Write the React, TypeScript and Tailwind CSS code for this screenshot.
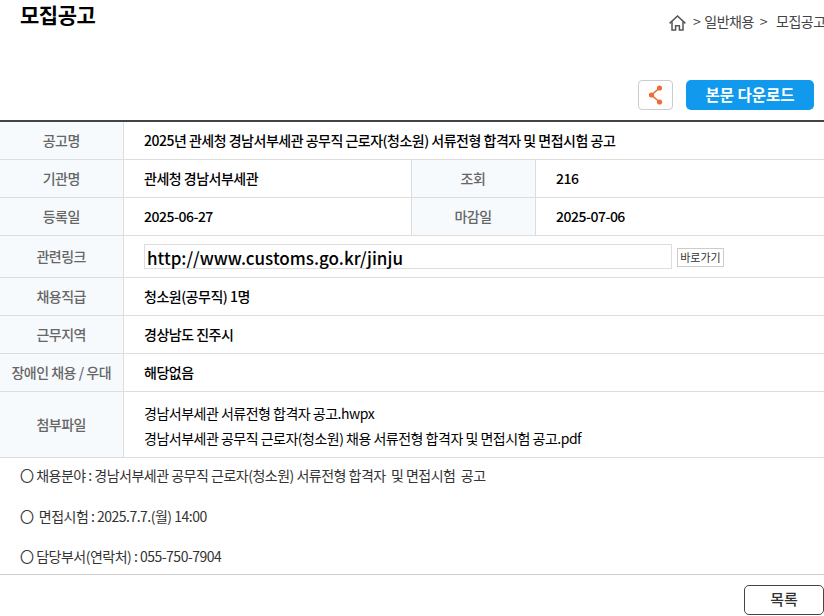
const th = 'bg-[#f7fafd] border-b border-r border-[#dddddd] text-center text-[14px] font-medium text-[#666666] tracking-[-0.5px] p-0'
const td = 'border-b border-[#dddddd] text-[14px] font-medium text-black tracking-[-0.5px] pl-[20.5px] p-0'

function HomeIcon() {
  return (
    <svg width="17" height="16" viewBox="0 0 17 16" fill="none" stroke="#555555" strokeWidth="1.5" className="mt-[5px] shrink-0">
      <path d="M0.6 8.4 8.5 1l7.9 7.4" />
      <path d="M3 6.5V15h3.6v-4.2h3.8V15H14V6.5" />
    </svg>
  )
}

function ShareIcon() {
  return (
    <svg width="16" height="22" viewBox="0 0 16 22" fill="#ee6c35" stroke="#ee6c35">
      <path d="M11.5 4 3.5 11l8 7" fill="none" strokeWidth="1.6" />
      <circle cx="11.5" cy="4" r="2.6" strokeWidth="0" />
      <circle cx="3.5" cy="11" r="2.6" strokeWidth="0" />
      <circle cx="11.5" cy="18" r="2.6" strokeWidth="0" />
    </svg>
  )
}

export default function App() {
  return (
    <div className="w-[824px] h-[616px] overflow-hidden bg-white font-['Noto_Sans_CJK_KR','Noto_Sans',sans-serif]">
      {/* Title + breadcrumb */}
      <div className="flex justify-between h-[80px]">
        <h2 className="pl-5 text-[21px] leading-[28px] font-bold text-black tracking-[-0.5px]">모집공고</h2>
        <div className="flex items-start pt-[10px] text-[14px] leading-[22px] text-[#444444] tracking-[-0.5px] whitespace-nowrap w-[155px]">
          <HomeIcon />
          <span className="ml-[7px]">&gt;</span>
          <span className="ml-[4px]">일반채용</span>
          <span className="ml-[6px]">&gt;</span>
          <span className="ml-[9px]">모집공고</span>
        </div>
      </div>

      {/* Actions */}
      <div className="flex justify-end items-start gap-[13px] pr-[10px] h-[40px]">
        <button className="flex items-center justify-center w-[35px] h-[30px] bg-white border border-[#cccccc] rounded-[4px]">
          <ShareIcon />
        </button>
        <button className="w-[128px] h-[30px] bg-[#1199ee] rounded-[5px] text-white text-[15.5px] font-bold">
          본문 다운로드
        </button>
      </div>

      {/* Detail table */}
      <table className="w-[824px] table-fixed border-collapse border-t-2 border-[#444444]">
        <colgroup>
          <col className="w-[123px]" />
          <col className="w-[288px]" />
          <col className="w-[124px]" />
          <col />
        </colgroup>
        <tbody>
          <tr className="h-[38px]">
            <th className={th}>공고명</th>
            <td className={td} colSpan={3}>2025년 관세청 경남서부세관 공무직 근로자(청소원) 서류전형 합격자 및 면접시험 공고</td>
          </tr>
          <tr className="h-[38px]">
            <th className={th}>기관명</th>
            <td className={td + ' border-r'}>관세청 경남서부세관</td>
            <th className={th}>조회</th>
            <td className={td}>216</td>
          </tr>
          <tr className="h-[38px]">
            <th className={th}>등록일</th>
            <td className={td + ' border-r'}>2025-06-27</td>
            <th className={th}>마감일</th>
            <td className={td}>2025-07-06</td>
          </tr>
          <tr className="h-[42px]">
            <th className={th}>관련링크</th>
            <td className={td} colSpan={3}>
              <div className="flex items-center gap-[5px]">
                <div className="w-[528px] h-[25px] border border-[#dddddd] pl-[2px] text-[17px] leading-[25px] tracking-normal">
                  http://www.customs.go.kr/jinju
                </div>
                <button className="w-[47px] h-[19px] mt-[2px] border border-[#cccccc] text-[11px] leading-[16px] font-normal text-[#333333] tracking-normal">
                  바로가기
                </button>
              </div>
            </td>
          </tr>
          <tr className="h-[38px]">
            <th className={th}>채용직급</th>
            <td className={td} colSpan={3}>청소원(공무직) 1명</td>
          </tr>
          <tr className="h-[38px]">
            <th className={th}>근무지역</th>
            <td className={td} colSpan={3}>경상남도 진주시</td>
          </tr>
          <tr className="h-[38px]">
            <th className={th}>장애인 채용 / 우대</th>
            <td className={td} colSpan={3}>해당없음</td>
          </tr>
          <tr className="h-[66px]">
            <th className={th}>첨부파일</th>
            <td className={td + ' !font-normal text-[#222222] leading-[25px] pt-[3px]'} colSpan={3}>
              <p>경남서부세관 서류전형 합격자 공고.hwpx</p>
              <p>경남서부세관 공무직 근로자(청소원) 채용 서류전형 합격자 및 면접시험 공고.pdf</p>
            </td>
          </tr>
        </tbody>
      </table>

      {/* Body text */}
      <div className="h-[117px] border-b border-[#cccccc] pl-5 pt-[5px] text-[14px] leading-[24px] text-[#333333] tracking-[-0.5px] whitespace-pre">
        <p className="mb-[17px]">〇 채용분야 : 경남서부세관 공무직 근로자(청소원) 서류전형 합격자  및 면접시험  공고</p>
        <p className="mb-[16px]">〇  면접시험 : 2025.7.7.(월) 14:00</p>
        <p>〇 담당부서(연락처) : 055-750-7904</p>
      </div>

      <div className="flex justify-end pt-[10px]">
        <button className="w-[80px] h-[30px] border border-[#444444] rounded-[5px] text-[15px] font-medium text-[#333333]">
          목록
        </button>
      </div>
    </div>
  )
}
